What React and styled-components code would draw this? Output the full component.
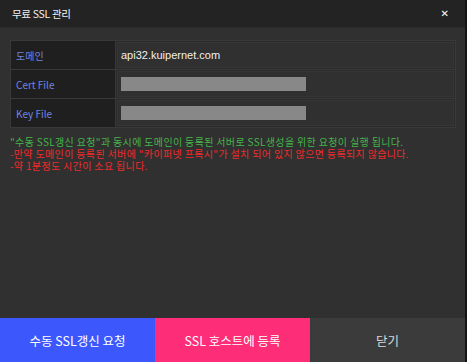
import React from 'react';
import styled, { createGlobalStyle } from 'styled-components';

const Global = createGlobalStyle`
  html, body {
    margin: 0;
    padding: 0;
    background: #141414;
  }
  #root {
    width: 467px;
    height: 362px;
  }
`

const rows = [
  { label: '도메인', value: 'api32.kuipernet.com' },
  { label: 'Cert File', bar: true },
  { label: 'Key File', bar: true },
]

const App = () => {
  return (
    <>
      <Global />
      <Modal>
        <Header>
          <Title>무료 SSL 관리</Title>
          <Close>✕</Close>
        </Header>
        <Body>
          <Table>
            {rows.map((r) => (
              <Row key={r.label}>
                <Label>{r.label}</Label>
                <Value>
                  {r.bar ? <Bar /> : <span>{r.value}</span>}
                </Value>
              </Row>
            ))}
          </Table>
          <Notes>
            <Note $color="#47b54a">"수동 SSL갱신 요청"과 동시에 도메인이 등록된 서버로 SSL생성을 위한 요청이 실행 됩니다.</Note>
            <Note $color="#f02a2a">-만약 도메인이 등록된 서버에 "카이퍼넷 프록시"가 설치 되어 있지 않으면 등록되지 않습니다.</Note>
            <Note $color="#f02a2a">-약 1분정도 시간이 소요 됩니다.</Note>
          </Notes>
        </Body>
        <Footer>
          <FootButton $bg="#3c58fd">수동 SSL갱신 요청</FootButton>
          <FootButton $bg="#fe2d77">SSL 호스트에 등록</FootButton>
          <FootButton $bg="#3b3b3b" $color="#dcdcdc">닫기</FootButton>
        </Footer>
      </Modal>
    </>
  )
}

export default App;

const Modal = styled.div`
  width: 465px;
  height: 362px;
  display: flex;
  flex-direction: column;
  background-color: #303030;
  border-right: 2px solid #141414;
  font-family: "Noto Sans CJK KR", "Noto Sans", sans-serif;
`

const Header = styled.div`
  height: 27px;
  flex-shrink: 0;
  display: flex;
  align-items: center;
  justify-content: space-between;
  padding: 0 16px 0 12px;
  background-color: #232323;
  border-bottom: 1px solid #2b2b2b;
`

const Title = styled.div`
  color: #f2f2f2;
  font-size: 10.5px;
  letter-spacing: -0.3px;
`

const Close = styled.div`
  color: #ffffff;
  font-size: 10px;
  font-weight: bold;
  font-family: "DejaVu Sans", sans-serif;
`

const Body = styled.div`
  flex: 1;
  padding: 12px 10px 0 10px;
`

const Table = styled.div`
  display: flex;
  flex-direction: column;
  gap: 1px;
  border: 1px solid #393939;
  width: 444px;
  background-color: #393939;
`

const Row = styled.div`
  display: grid;
  grid-template-columns: 104px 1fr;
  gap: 1px;
  height: 28px;
`

const Label = styled.div`
  background-color: #1f1f1f;
  color: #6f84e0;
  font-size: 10px;
  display: flex;
  align-items: center;
  padding-left: 5px;
`

const Value = styled.div`
  background-color: #303030;
  box-shadow: inset 0 0 0 1px #2a2a2a, inset 0 0 0 2px #363636;
  display: flex;
  align-items: center;
  padding-left: 5px;
  color: #efefef;
  font-size: 11px;
  font-family: "Liberation Sans", sans-serif;
`

const Bar = styled.div`
  width: 185px;
  height: 14px;
  background-color: #888888;
`

const Notes = styled.div`
  margin-top: 8px;
  display: flex;
  flex-direction: column;
`

const Note = styled.div`
  color: ${(p) => p.$color};
  font-size: 10px;
  line-height: 12px;
  letter-spacing: 0.35px;
  white-space: nowrap;
`

const Footer = styled.div`
  height: 44px;
  flex-shrink: 0;
  display: grid;
  grid-template-columns: 155px 155px 155px;
`

const FootButton = styled.button`
  border: none;
  margin: 0;
  padding: 0;
  background-color: ${(p) => p.$bg};
  color: ${(p) => p.$color || '#ffffff'};
  font-family: "Noto Sans CJK KR", Roboto, sans-serif;
  font-size: 12.5px;
  cursor: pointer;
`
